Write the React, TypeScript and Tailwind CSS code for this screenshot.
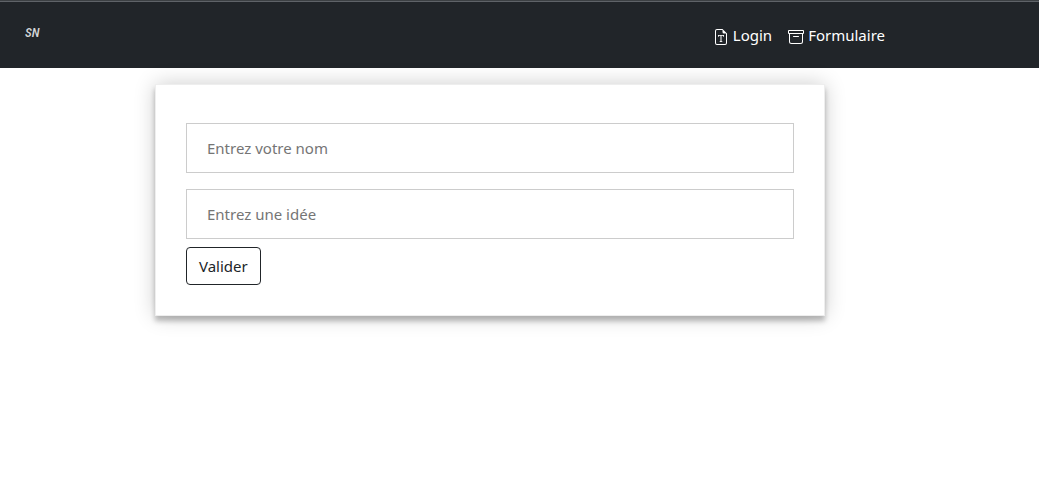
import { BsArchive, BsFileEarmarkFont } from "react-icons/bs";

const links = [
  { label: "Login", href: "#login", Icon: BsFileEarmarkFont },
  { label: "Formulaire", href: "#formulaire", Icon: BsArchive },
];

const fields = [
  { id: "nom", placeholder: "Entrez votre nom" },
  { id: "idee", placeholder: "Entrez une idée" },
];

function Header() {
  return (
    <header className="border-t border-[#3c4043] bg-[#212529]">
      <div className="flex h-[67px] items-center justify-between border-t border-[#5f6368] pl-[25px] pr-[154px]">
        <a
          href="#accueil"
          className="pb-1 font-['Roboto_Condensed','Roboto',sans-serif] text-[13px] leading-4 font-medium text-[#d4d6d8] italic"
        >
          SN
        </a>
        <nav className="flex gap-4">
          {links.map(({ label, href, Icon }) => (
            <a key={label} href={href} className="flex items-center gap-1 text-white">
              <Icon className="mt-1 size-4" aria-hidden="true" />
              {label}
            </a>
          ))}
        </nav>
      </div>
    </header>
  );
}

export default function App() {
  return (
    <div className="min-h-screen bg-white font-['Noto_Sans',sans-serif] text-[15px] leading-6">
      <Header />
      <main className="py-4 pl-[155px]">
        <form
          className="flex max-w-[670px] flex-col items-start border border-[#eeeeee] bg-white px-[30px] pt-[38px] pb-[30px] shadow-[0_0_20px_0_rgba(0,0,0,0.2),0_5px_5px_0_rgba(0,0,0,0.24)]"
          onSubmit={(e) => e.preventDefault()}
        >
          <div className="flex w-full flex-col gap-4">
            {fields.map(({ id, placeholder }) => (
              <input
                key={id}
                id={id}
                name={id}
                type="text"
                aria-label={placeholder}
                placeholder={placeholder}
                className="h-[50px] w-full border border-[#cccccc] bg-white px-5 text-[#212529] placeholder:text-[#757575]"
              />
            ))}
          </div>
          <button
            type="submit"
            className="mt-2 h-[38px] rounded border border-[#212529] px-3 text-[#212529]"
          >
            Valider
          </button>
        </form>
      </main>
    </div>
  );
}
